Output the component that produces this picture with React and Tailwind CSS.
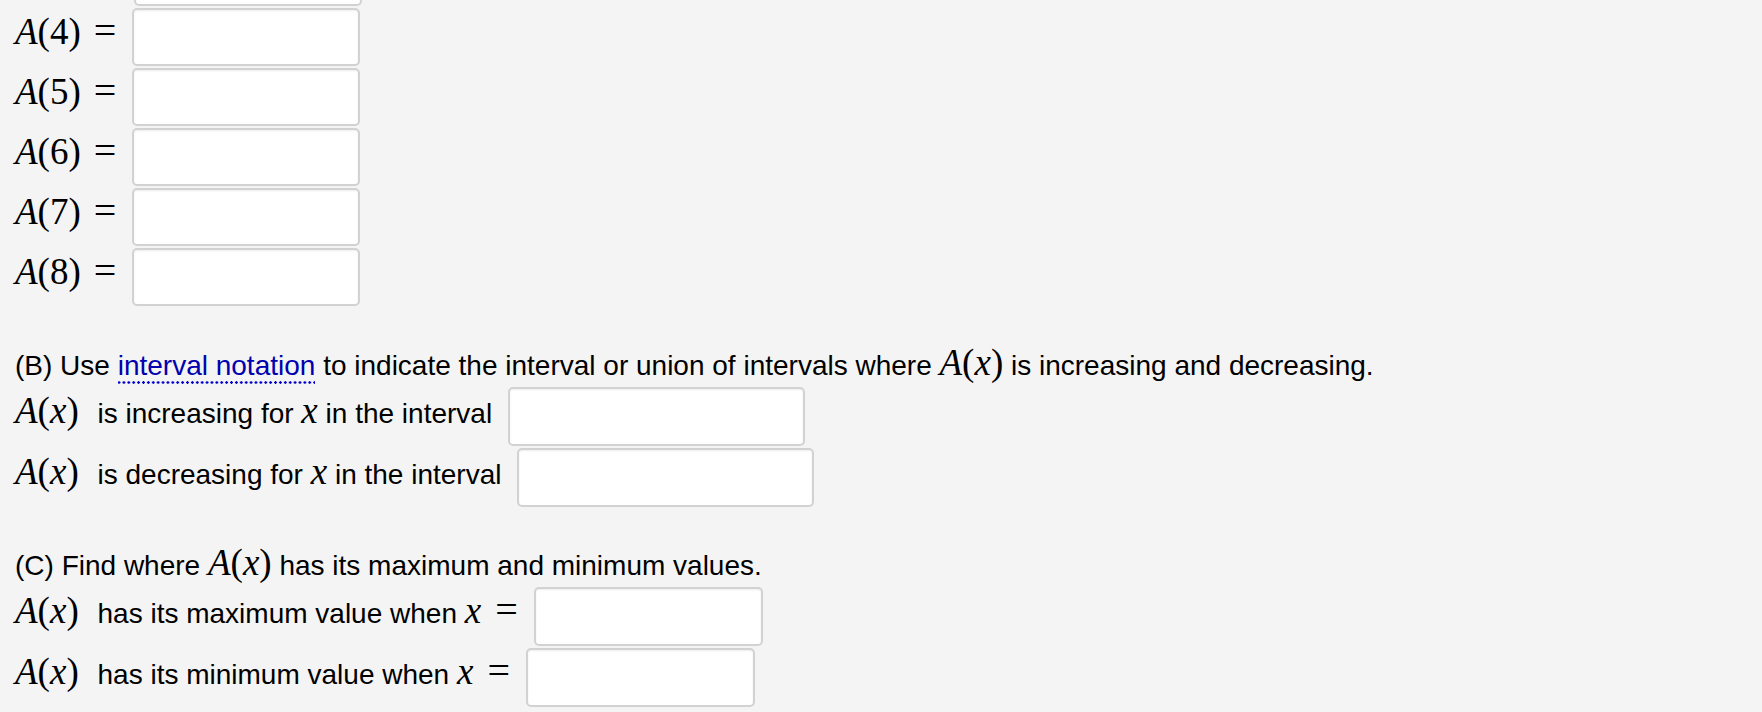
import React from 'react';

// math pieces are set in a Times-like serif, sized up like MathJax output
const Tex = ({ children, className = '' }) => (
  <span className={`font-['Liberation_Serif',serif] text-[37px] leading-[0] ${className}`}>{children}</span>
);

const V = ({ children }) => <span className="italic">{children}</span>;

const Eq = ({ className = '' }) => (
  <span className={`font-['Liberation_Serif',serif] text-[40px] leading-[0] ${className}`}>=</span>
);

const Ax = () => (
  <Tex>
    <V>A</V>(<V>x</V>)
  </Tex>
);

const Box = ({ className = '' }) => (
  <input
    type="text"
    className={`my-px rounded-[5px] border-2 border-[#d2d2d2] bg-white shadow-[inset_0_1px_2px_rgba(0,0,0,0.08)] outline-none ${className}`}
  />
);

const AnswerRow = ({ label, boxClass }) => (
  <div className="flex items-center">
    <div className="mb-[5px] leading-[36px] whitespace-nowrap">{label}</div>
    <Box className={`ml-[16px] ${boxClass}`} />
  </div>
);

const valueRows = ['4', '5', '6', '7', '8'];

export default function App() {
  return (
    <div className="h-[712px] overflow-hidden bg-[#f4f4f4] pl-[15px] font-['Liberation_Sans',Arial,sans-serif] text-[28px] text-black">
      {/* Part A: values of A(n), the row above A(4) is scrolled out of view */}
      <div className="-mt-[53px]">
        <div className="flex">
          <Box className="ml-[119px] h-[58px] w-[228px]" />
        </div>
        {valueRows.map((n) => (
          <AnswerRow
            key={n}
            boxClass="h-[58px] w-[228px]"
            label={
              <>
                <Tex>
                  <V>A</V>({n})
                </Tex>
                <Eq className="ml-[13px]" />
              </>
            }
          />
        ))}
      </div>

      {/* Part B */}
      <p className="mt-[40px] mb-px leading-[38px] whitespace-nowrap">
        (B) Use{' '}
        <span className="pb-[3px] text-[#0000b0] bg-[radial-gradient(circle,#0000cc_1.1px,transparent_1.5px)] bg-[length:4.9px_3px] bg-bottom bg-repeat-x">
          interval notation
        </span>{' '}
        to indicate the interval or union of intervals where <Ax /> is increasing and decreasing.
      </p>
      <AnswerRow
        boxClass="h-[59px] w-[297px]"
        label={
          <>
            <Ax /> <span className="ml-[11px]">is increasing for </span>
            <Tex>
              <V>x</V>
            </Tex>{' '}
            in the interval
          </>
        }
      />
      <AnswerRow
        boxClass="h-[59px] w-[297px]"
        label={
          <>
            <Ax /> <span className="ml-[11px]">is decreasing for </span>
            <Tex>
              <V>x</V>
            </Tex>{' '}
            in the interval
          </>
        }
      />

      {/* Part C */}
      <p className="mt-[39px] mb-px leading-[38px] whitespace-nowrap">
        (C) Find where <Ax /> has its maximum and minimum values.
      </p>
      <AnswerRow
        boxClass="h-[59px] w-[229px]"
        label={
          <>
            <Ax /> <span className="ml-[11px]">has its maximum value when </span>
            <Tex>
              <V>x</V>
            </Tex>
            <Eq className="ml-[14px]" />
          </>
        }
      />
      <AnswerRow
        boxClass="h-[59px] w-[229px]"
        label={
          <>
            <Ax /> <span className="ml-[11px]">has its minimum value when </span>
            <Tex>
              <V>x</V>
            </Tex>
            <Eq className="ml-[14px]" />
          </>
        }
      />
    </div>
  );
}
